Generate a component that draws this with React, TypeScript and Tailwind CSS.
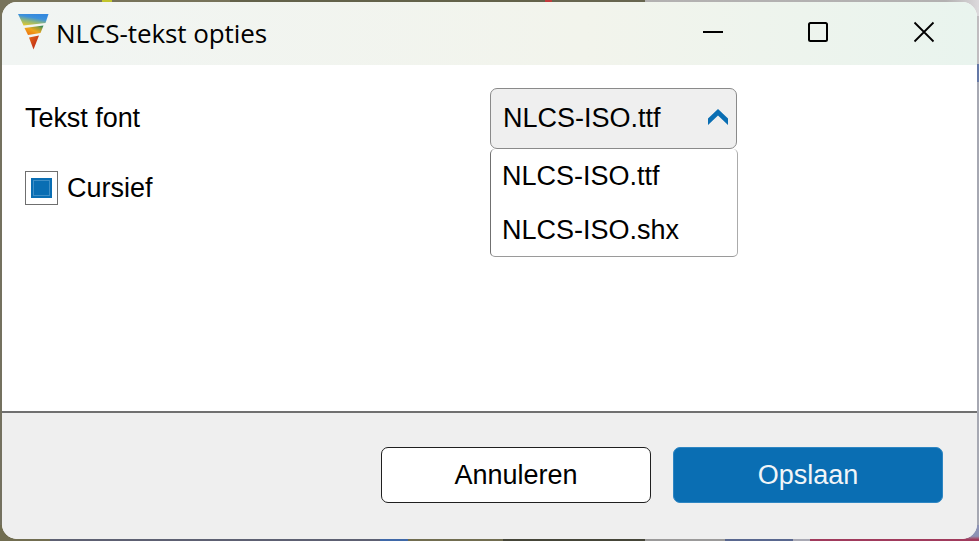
import { useState } from "react";

const fonts = ["NLCS-ISO.ttf", "NLCS-ISO.shx"];

const Logo = () => {
    return (
        <svg width="32" height="37" viewBox="0 0 32 37">
            <defs>
                <linearGradient id="sky" x1="0" y1="1" x2="0.5" y2="0">
                    <stop offset="0.1" stopColor="#e3c82c" />
                    <stop offset="0.45" stopColor="#8fb779" />
                    <stop offset="0.75" stopColor="#3d92dc" />
                    <stop offset="1" stopColor="#3489de" />
                </linearGradient>
                <linearGradient id="land" x1="0" y1="0.9" x2="0.8" y2="0">
                    <stop offset="0" stopColor="#ee6d0c" />
                    <stop offset="0.5" stopColor="#eea51c" />
                    <stop offset="0.85" stopColor="#8c9c3c" />
                    <stop offset="1" stopColor="#3d8a55" />
                </linearGradient>
                <linearGradient id="core" x1="0" y1="0" x2="1" y2="1">
                    <stop offset="0" stopColor="#e66c16" />
                    <stop offset="0.6" stopColor="#c93a18" />
                    <stop offset="1" stopColor="#b83a1c" />
                </linearGradient>
            </defs>
            <path d="M0 1H30.5L27.5 10L5.5 12.5Z" fill="url(#sky)" />
            <path d="M6.5 15L25.5 12.5L22.5 20L10 22Z" fill="url(#land)" />
            <path d="M11 24.5L21 22.5L15.5 36.5Z" fill="url(#core)" />
        </svg>
    );
};

const TitleBar = ({ title }: { title: string }) => {
    return (
        <header className="flex h-[63px] shrink-0 items-start justify-between bg-linear-to-r from-[#f1f5f3] via-[#f2f4ec] via-60% to-[#e9f4ee] pl-4">
            <div className="flex items-start">
                <div className="pt-[11px]">
                    <Logo />
                </div>
                <h1 className="ml-[6px] mt-[13px] font-['Open_Sans',sans-serif] text-[26px] leading-[36px] tracking-[-0.08px] text-black">{title}</h1>
            </div>
            <div className="flex items-center">
                <button type="button" aria-label="Minimaliseren" className="flex h-[60px] w-[105px] items-center justify-center">
                    <svg width="22" height="22" viewBox="0 0 22 22" fill="none" stroke="#000" strokeWidth="2">
                        <path d="M1 11H21" />
                    </svg>
                </button>
                <button type="button" aria-label="Maximaliseren" className="flex h-[60px] w-[105px] items-center justify-center">
                    <svg width="22" height="22" viewBox="0 0 22 22" fill="none" stroke="#000" strokeWidth="2">
                        <rect x="2" y="2" width="18" height="18" rx="1.5" />
                    </svg>
                </button>
                <button type="button" aria-label="Sluiten" className="flex h-[60px] w-[107px] items-center justify-center">
                    <svg width="22" height="22" viewBox="0 0 22 22" fill="none" stroke="#000" strokeWidth="1.8">
                        <path d="M1.5 1.5L20.5 20.5M20.5 1.5L1.5 20.5" />
                    </svg>
                </button>
            </div>
        </header>
    );
};

const FontSelect = ({
    value,
    open,
    onToggle,
    onSelect
}: {
    value: string,
    open: boolean,
    onToggle: () => void,
    onSelect: (font: string) => void
}) => {
    return (
        <div className="relative w-[247px]">
            <button type="button" onClick={onToggle} className="flex h-[61px] w-full items-center justify-between rounded-[7px] border border-[#8a8a8a] bg-[#efefef] pb-[2px] pl-3 pr-2">
                <span>{value}</span>
                <svg width="20" height="17" viewBox="0 0 20 17" fill="#0a6eb3" className={open ? "mb-px" : "rotate-180"}>
                    <path d="M10 0L20 9.5V16L10 6.5L0 16V9.5Z" />
                </svg>
            </button>
            {open && (
                <ul className="absolute left-0 top-[61px] h-[108px] w-[248px] rounded-[5px] border border-t-0 border-[#9a9a9a] border-l-[#707070] border-r-[#ababab] bg-white">
                    {fonts.map((font) => (
                        <li key={font} onClick={() => onSelect(font)} className="flex h-[54px] items-center pl-[11px]">
                            {font}
                        </li>
                    ))}
                </ul>
            )}
        </div>
    );
};

// Slivers of the drawing that stay visible around the dialog
const EdgeTop = () => {
    return (
        <div className="flex h-4 w-full bg-[#77735a]">
            <div className="w-[102px]" />
            <div className="w-[10px] bg-[#c2c52c]" />
            <div className="w-[118px]" />
            <div className="w-[315px] bg-[#63624a]" />
            <div className="w-[7px] bg-[#c03a3c]" />
            <div className="w-[93px] bg-[#67654f]" />
            <div className="flex-1 bg-linear-to-r from-[#b3b1b1] from-90% to-[#dcd9dc]" />
        </div>
    );
};

const EdgeBottom = () => {
    return (
        <div className="flex h-4 w-full bg-[#716d50]">
            <div className="w-[50px]" />
            <div className="w-[330px] bg-[#5d6072]" />
            <div className="w-[28px] bg-[#3f68a8]" />
            <div className="w-[95px]" />
            <div className="w-[142px] bg-[#454538]" />
            <div className="w-[80px] bg-[#9b9a9a]" />
            <div className="w-[68px] bg-[#59678f]" />
            <div className="w-[17px] bg-[#a9a9b4]" />
            <div className="flex-1 bg-linear-to-b from-[#8d93b5] from-70% to-[#a03a5c] to-90%" />
        </div>
    );
};

const App = () => {
    const [font, setFont] = useState(fonts[0]);
    const [open, setOpen] = useState(true);
    const [italic, setItalic] = useState(true);

    return (
        <div className="grid h-screen w-screen overflow-hidden">
            <div className="col-start-1 row-start-1 flex flex-col">
                <EdgeTop />
                <div className="flex flex-1 justify-between">
                    <div className="w-[2px] bg-[#74715f]" />
                    <div className="flex w-[2px] flex-col bg-[#a6a8b2]">
                        <div className="h-12 bg-[#bfbcbf]" />
                        <div className="h-[18px] bg-[#6578a6]" />
                    </div>
                </div>
                <EdgeBottom />
            </div>
            <div className="col-start-1 row-start-1 m-[2px] flex flex-col overflow-hidden rounded-[15px] bg-white font-['Liberation_Sans',Arial,sans-serif] text-[27px] leading-[30px] text-black">
                <TitleBar title="NLCS-tekst opties" />
                <main className="flex flex-1 items-start pl-[23px] pt-[23px]">
                    <div className="flex w-[465px] flex-col">
                        <div className="flex h-[59px] items-center tracking-[-0.05px]">Tekst font</div>
                        <label className="mt-6 flex h-[34px] items-center gap-[9px]">
                            <input type="checkbox" checked={italic} onChange={() => setItalic(!italic)} className="sr-only" />
                            <span className="flex h-[34px] w-[33px] items-center justify-center border border-[#6f6f6f] bg-white">
                                {italic && <span className="h-5 w-[21px] border-2 border-[#0a6eb3] bg-[#0a6eb3] outline-1 -outline-offset-3 outline-[#3f8fc6]" />}
                            </span>
                            <span className="pb-px">Cursief</span>
                        </label>
                    </div>
                    <FontSelect
                        value={font}
                        open={open}
                        onToggle={() => setOpen(!open)}
                        onSelect={(next) => {
                            setFont(next);
                            setOpen(false);
                        }}
                    />
                </main>
                <footer className="flex h-[128px] shrink-0 items-start justify-end gap-[22px] border-t-2 border-[#707070] bg-[#efefef] pr-[34px] pt-[34px]">
                    <button type="button" className="h-[56px] w-[270px] rounded-[7px] border border-[#1f1f1f] bg-white pb-px">Annuleren</button>
                    <button type="button" className="h-[56px] w-[270px] rounded-[7px] border border-[#2e86c3] bg-[#0a6eb3] pb-px text-[#f1f5f8]">Opslaan</button>
                </footer>
            </div>
        </div>
    );
};

export default App;
